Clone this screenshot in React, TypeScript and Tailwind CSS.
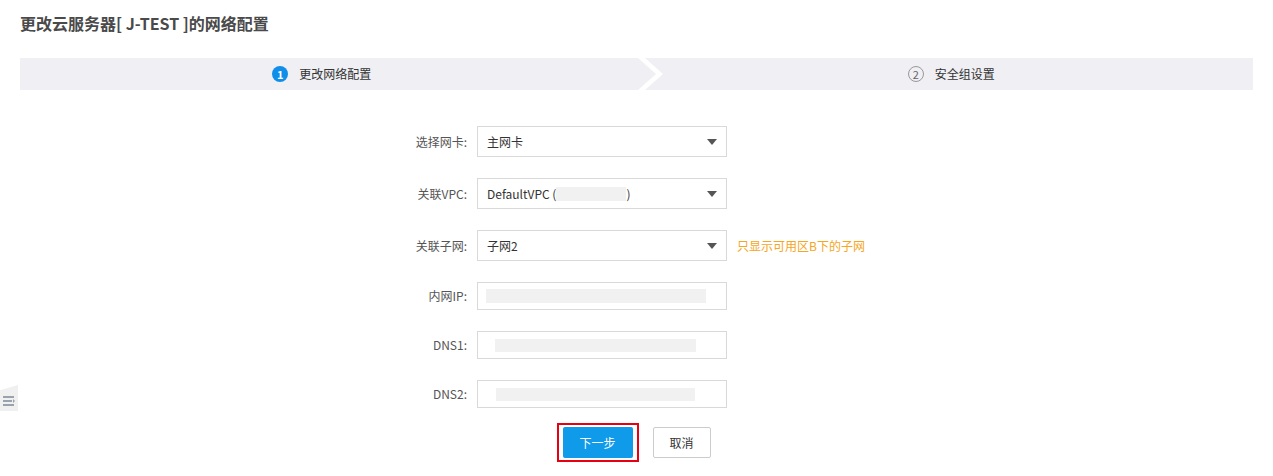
const font = { fontFamily: '"Noto Sans CJK SC", "Noto Sans", sans-serif' };

function Caret() {
  return (
    <svg width="10" height="6" viewBox="0 0 10 6" className="absolute right-[9px] top-1/2 -translate-y-1/2">
      <path d="M0 0h10L5 6z" fill="#555" />
    </svg>
  );
}

function Blur({ className }: { className: string }) {
  return <span className={`block bg-[#f1f1f1] ${className}`} />;
}

function Row({
  label,
  tall,
  children,
  hint,
}: {
  label: string;
  tall?: boolean;
  children: React.ReactNode;
  hint?: string;
}) {
  return (
    <div className="mb-[21px] flex items-center">
      <div className="w-[120px] pr-[10px] text-right text-[12px] leading-[16px] text-[#555]">{label}</div>
      <div
        className={`relative flex w-[250px] items-center border border-[#d9d9d9] bg-white px-[9px] text-[12px] text-[#333] ${
          tall ? 'h-[31px]' : 'h-[28px]'
        }`}
      >
        {children}
      </div>
      {hint ? <div className="ml-[10px] text-[12px] leading-[16px] text-[#f5a623]">{hint}</div> : null}
    </div>
  );
}

export default function App() {
  return (
    <div className="relative h-[476px] w-[1273px] bg-white px-[20px] pt-[11px]" style={font}>
      <h1 className="h-[24px] text-[16px] font-bold leading-[24px] text-[#4a4a4a]">更改云服务器[ J-TEST ]的网络配置</h1>

      <div className="relative mt-[23px] flex h-[32px] bg-[#efeff4] text-[12px] text-[#333]">
        <div className="flex flex-1 items-center justify-center gap-[11px] pr-[10px]">
          <span className="flex h-[16px] w-[16px] items-center justify-center rounded-full bg-[#108ee9] text-[11px] font-bold leading-none text-white">
            1
          </span>
          <span>更改网络配置</span>
        </div>
        <div className="flex flex-1 items-center justify-center gap-[11px] pl-[16px]">
          <span className="flex h-[16px] w-[16px] items-center justify-center rounded-full border border-[#999] text-[11px] leading-none text-[#666]">
            2
          </span>
          <span>安全组设置</span>
        </div>
        <svg width="26" height="32" viewBox="0 0 26 32" className="absolute left-[618px] top-0">
          <path d="M0 0h7l18 16L7 32H0l18-16z" fill="#fff" />
        </svg>
      </div>

      <div className="mt-[36px] pl-[337px]">
        <Row label="选择网卡:" tall>
          <span>主网卡</span>
          <Caret />
        </Row>
        <Row label="关联VPC:" tall>
          <span>DefaultVPC (</span>
          <Blur className="h-[14px] w-[70px]" />
          <span>)</span>
          <Caret />
        </Row>
        <Row label="关联子网:" tall hint="只显示可用区B下的子网">
          <span>子网2</span>
          <Caret />
        </Row>
        <Row label="内网IP:">
          <Blur className="ml-[-1px] h-[14px] w-[220px]" />
        </Row>
        <Row label="DNS1:">
          <Blur className="ml-[8px] h-[13px] w-[201px]" />
        </Row>
        <Row label="DNS2:">
          <Blur className="ml-[9px] h-[13px] w-[199px]" />
        </Row>
      </div>

      <div className="mt-[-2px] flex justify-center gap-[20px]">
        <div className="relative">
          <button className="h-[31px] w-[70px] rounded-[2px] bg-[#0f9aea] text-[12px] text-white">下一步</button>
          <div className="pointer-events-none absolute inset-x-[-6px] inset-y-[-4px] border-2 border-[#e60012]" />
        </div>
        <button className="h-[31px] w-[58px] rounded-[2px] border border-[#ccc] bg-white text-[12px] text-[#333]">取消</button>
      </div>

      <div className="absolute left-0 top-[385px] flex h-[26px] w-[18px] items-end bg-[#f0f0f0] pb-[3px] pl-[2px] [clip-path:polygon(0_20%,100%_0,100%_100%,0_100%)]">
        <svg width="14" height="14" viewBox="0 0 14 14">
          <path d="M1 3h11M1 7h9M1 11h11" stroke="#9aa3ad" strokeWidth="2" />
          <path d="M11 5l2 2-2 2z" fill="#9aa3ad" />
        </svg>
      </div>
    </div>
  );
}
